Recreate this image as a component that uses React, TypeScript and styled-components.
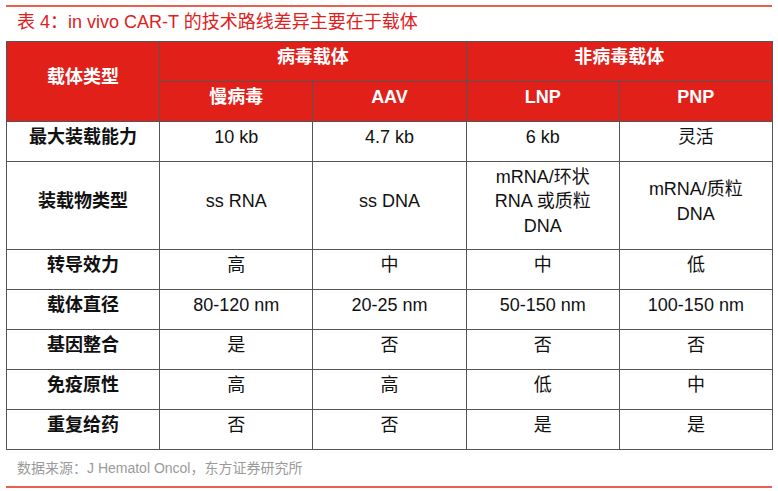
import styled, { createGlobalStyle } from "styled-components"

const GlobalStyle = createGlobalStyle`
  html, body {
    margin: 0;
    padding: 0;
    background: #ffffff;
  }
  body {
    font-family: "Liberation Sans", "Noto Sans CJK SC", sans-serif;
  }
`

interface RowData {
  label: string
  values: string[][]
  tall?: boolean
}

const rows: RowData[] = [
  { label: "最大装载能力", values: [["10 kb"], ["4.7 kb"], ["6 kb"], ["灵活"]] },
  {
    label: "装载物类型",
    values: [["ss RNA"], ["ss DNA"], ["mRNA/环状", "RNA 或质粒", "DNA"], ["mRNA/质粒", "DNA"]],
    tall: true,
  },
  { label: "转导效力", values: [["高"], ["中"], ["中"], ["低"]] },
  { label: "载体直径", values: [["80-120 nm"], ["20-25 nm"], ["50-150 nm"], ["100-150 nm"]] },
  { label: "基因整合", values: [["是"], ["否"], ["否"], ["否"]] },
  { label: "免疫原性", values: [["高"], ["高"], ["低"], ["中"]] },
  { label: "重复给药", values: [["否"], ["否"], ["是"], ["是"]] },
]

const App = () => {
  return (
    <>
      <GlobalStyle />
      <Page>
        <Rule />
        <Title>表 4：in vivo CAR-T 的技术路线差异主要在于载体</Title>
        <Table>
          <colgroup>
            <col />
            <col />
            <col />
            <col />
            <col />
          </colgroup>
          <thead>
            <HeadRow>
              <HeadCell rowSpan={2}>载体类型</HeadCell>
              <HeadCell colSpan={2}>病毒载体</HeadCell>
              <HeadCell colSpan={2}>非病毒载体</HeadCell>
            </HeadRow>
            <HeadRow>
              <HeadCell>慢病毒</HeadCell>
              <HeadCell>AAV</HeadCell>
              <HeadCell>LNP</HeadCell>
              <HeadCell>PNP</HeadCell>
            </HeadRow>
          </thead>
          <tbody>
            {rows.map((row) => (
              <BodyRow key={row.label} $tall={row.tall}>
                <LabelCell>{row.label}</LabelCell>
                {row.values.map((lines, i) => (
                  <ValueCell key={i}>
                    {lines.map((line) => (
                      <Line key={line}>{line}</Line>
                    ))}
                  </ValueCell>
                ))}
              </BodyRow>
            ))}
          </tbody>
        </Table>
        <Source>数据来源：J Hematol Oncol，东方证券研究所</Source>
        <Rule />
      </Page>
    </>
  )
}

const Page = styled.div`
  display: flex;
  flex-direction: column;
  width: 766px;
  padding: 5px 0 0 6px;
`
const Rule = styled.div`
  height: 1.5px;
  width: 766px;
  background: #e8604f;
`
const Title = styled.div`
  font-size: 18px;
  color: #e0201b;
  line-height: 22px;
  padding: 4px 0 8.5px 11px;
`
const Table = styled.table`
  width: 767px;
  table-layout: fixed;
  border-collapse: collapse;
  border: 1.5px solid #555555;
  col {
    width: 20%;
  }
`
const HeadRow = styled.tr`
  height: 40px;
`
const HeadCell = styled.th`
  background: #e1201a;
  color: #ffffff;
  font-size: 18px;
  font-weight: bold;
  text-align: center;
  vertical-align: middle;
  padding: 0 0 10px;
  border: 1px solid #555555;
  line-height: 24px;
`
const BodyRow = styled.tr<{ $tall?: boolean }>`
  height: ${(p) => (p.$tall ? "88px" : "40px")};
`
const LabelCell = styled.td`
  font-size: 18px;
  font-weight: bold;
  color: #111111;
  text-align: center;
  vertical-align: middle;
  padding: 0 0 10px;
  border: 1px solid #555555;
  line-height: 24px;
`
const ValueCell = styled.td`
  font-size: 18px;
  color: #111111;
  text-align: center;
  vertical-align: middle;
  padding: 0 0 8px;
  border: 1px solid #555555;
  line-height: 24.5px;
`
const Line = styled.div`
  white-space: nowrap;
`
const Source = styled.div`
  font-size: 14px;
  color: #9a9a9a;
  padding: 10px 0 0 11px;
  height: 26px;
  line-height: 16px;
`

export default App
